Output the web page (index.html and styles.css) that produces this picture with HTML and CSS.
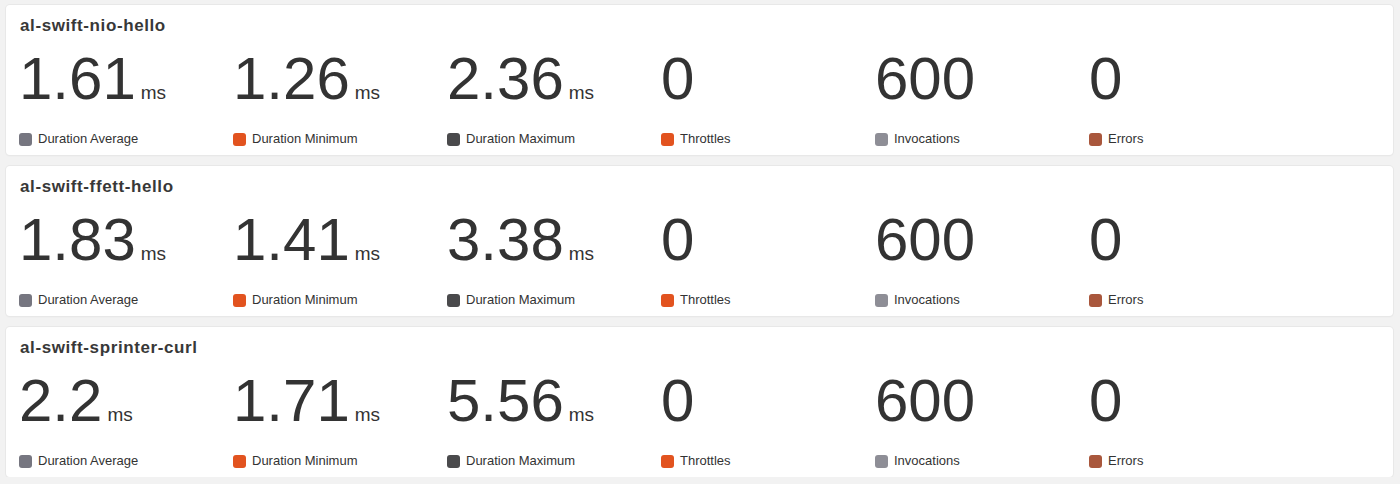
FILE: index.html
```html
<!DOCTYPE html>
<html>
<head>
<meta charset="utf-8">
<link rel="stylesheet" href="styles.css">
</head>
<body>
<div class="list">
  <section class="card">
    <h2 class="title">al-swift-nio-hello</h2>
    <div class="grid">
      <div class="stat"><div class="value">1.61<span class="unit">ms</span></div><div class="legend"><span class="sw sw-avg"></span>Duration Average</div></div>
      <div class="stat"><div class="value">1.26<span class="unit">ms</span></div><div class="legend"><span class="sw sw-min"></span>Duration Minimum</div></div>
      <div class="stat"><div class="value">2.36<span class="unit">ms</span></div><div class="legend"><span class="sw sw-max"></span>Duration Maximum</div></div>
      <div class="stat"><div class="value">0</div><div class="legend"><span class="sw sw-thr"></span>Throttles</div></div>
      <div class="stat"><div class="value">600</div><div class="legend"><span class="sw sw-inv"></span>Invocations</div></div>
      <div class="stat"><div class="value">0</div><div class="legend"><span class="sw sw-err"></span>Errors</div></div>
    </div>
  </section>
  <section class="card">
    <h2 class="title">al-swift-ffett-hello</h2>
    <div class="grid">
      <div class="stat"><div class="value">1.83<span class="unit">ms</span></div><div class="legend"><span class="sw sw-avg"></span>Duration Average</div></div>
      <div class="stat"><div class="value">1.41<span class="unit">ms</span></div><div class="legend"><span class="sw sw-min"></span>Duration Minimum</div></div>
      <div class="stat"><div class="value">3.38<span class="unit">ms</span></div><div class="legend"><span class="sw sw-max"></span>Duration Maximum</div></div>
      <div class="stat"><div class="value">0</div><div class="legend"><span class="sw sw-thr"></span>Throttles</div></div>
      <div class="stat"><div class="value">600</div><div class="legend"><span class="sw sw-inv"></span>Invocations</div></div>
      <div class="stat"><div class="value">0</div><div class="legend"><span class="sw sw-err"></span>Errors</div></div>
    </div>
  </section>
  <section class="card">
    <h2 class="title">al-swift-sprinter-curl</h2>
    <div class="grid">
      <div class="stat"><div class="value">2.2<span class="unit">ms</span></div><div class="legend"><span class="sw sw-avg"></span>Duration Average</div></div>
      <div class="stat"><div class="value">1.71<span class="unit">ms</span></div><div class="legend"><span class="sw sw-min"></span>Duration Minimum</div></div>
      <div class="stat"><div class="value">5.56<span class="unit">ms</span></div><div class="legend"><span class="sw sw-max"></span>Duration Maximum</div></div>
      <div class="stat"><div class="value">0</div><div class="legend"><span class="sw sw-thr"></span>Throttles</div></div>
      <div class="stat"><div class="value">600</div><div class="legend"><span class="sw sw-inv"></span>Invocations</div></div>
      <div class="stat"><div class="value">0</div><div class="legend"><span class="sw sw-err"></span>Errors</div></div>
    </div>
  </section>
</div>
</body>
</html>
```

FILE: styles.css
```css
html, body {
  margin: 0;
  padding: 0;
  background: #f2f2f2;
}
body {
  font-family: "Liberation Sans", Arial, sans-serif;
  color: #333;
}
.list {
  display: flex;
  flex-direction: column;
  gap: 11px;
  padding: 5px 7px 0 6px;
}
.card {
  background: #fff;
  border-radius: 4px;
  box-shadow: 0 0 0 1px #e8e8e8, 0 1px 2px rgba(0, 0, 0, 0.06);
  padding: 11px 13px 8px;
  height: 150px;
  box-sizing: border-box;
}
.title {
  margin: 0 0 0 1px;
  font-size: 17px;
  line-height: 20px;
  font-weight: 700;
  letter-spacing: 0.6px;
  color: #383838;
}
.grid {
  display: grid;
  grid-template-columns: repeat(6, 214px);
  margin-top: 13px;
}
.stat {
  display: flex;
  flex-direction: column;
}
.value {
  font-size: 60px;
  line-height: 60px;
  height: 60px;
  color: #333;
  white-space: nowrap;
}
.unit {
  font-size: 19px;
  line-height: 1;
  margin-left: 5px;
  color: #333;
}
.legend {
  display: flex;
  align-items: center;
  gap: 6px;
  margin-top: 22px;
  font-size: 13px;
  line-height: 16px;
  color: #333;
}
.sw {
  width: 13px;
  height: 13px;
  border-radius: 3px;
  flex: none;
}
.sw-avg { background: #767680; }
.sw-min { background: #e2531f; }
.sw-max { background: #4a4a4c; }
.sw-thr { background: #e2531f; }
.sw-inv { background: #8e8e96; }
.sw-err { background: #a9573c; }
```
